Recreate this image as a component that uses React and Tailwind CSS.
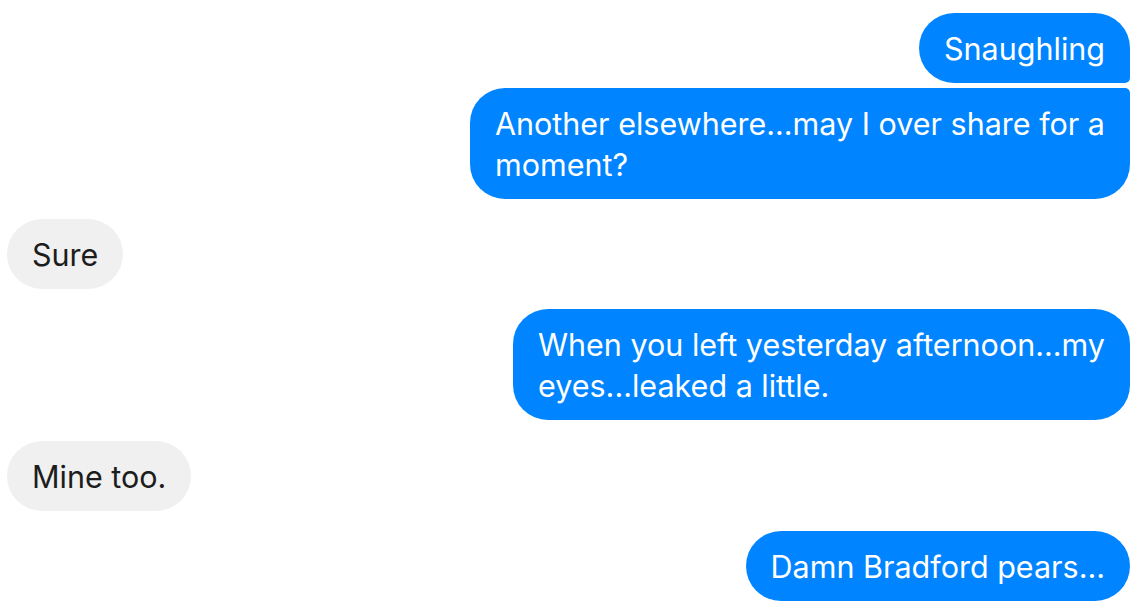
const font = { fontFamily: 'Inter, "Liberation Sans", sans-serif' }

const Bubble = ({ mine, corner = '', lines }) => (
  <div className={`flex ${mine ? 'justify-end' : 'justify-start'}`}>
    <div
      className={`px-[25px] py-[14.5px] text-[30.5px] leading-[41px] whitespace-nowrap rounded-[35px] ${
        mine ? 'bg-[#0084ff] text-white' : 'bg-[#f0f0f0] text-[#1d1d1d]'
      } ${corner}`}
    >
      {lines.map((l, i) => (
        <div key={i}>{l}</div>
      ))}
    </div>
  </div>
)

export default function App() {
  return (
    <div className="w-[1135px] h-[610px] bg-white overflow-hidden pt-[13px] pl-[7px] pr-[5px]" style={font}>
      <div className="flex flex-col">
        <Bubble mine corner="rounded-br-[5px]" lines={['Snaughling']} />
        <div className="h-[5px]" />
        <Bubble mine corner="rounded-tr-[5px]" lines={['Another elsewhere...may I over share for a', 'moment?']} />
        <div className="h-[20px]" />
        <Bubble lines={['Sure']} />
        <div className="h-[20px]" />
        <Bubble mine lines={['When you left yesterday afternoon...my', 'eyes...leaked a little.']} />
        <div className="h-[21px]" />
        <Bubble lines={['Mine too.']} />
        <div className="h-[20px]" />
        <Bubble mine lines={['Damn Bradford pears...']} />
      </div>
    </div>
  )
}
